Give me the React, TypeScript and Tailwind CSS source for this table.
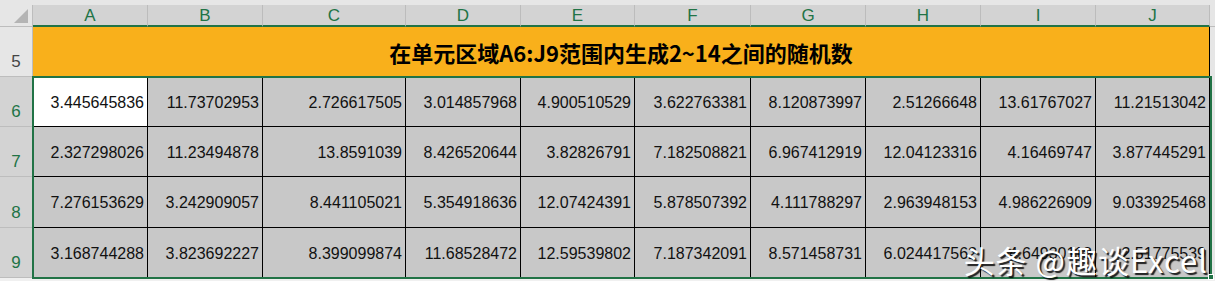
const cols = ['A', 'B', 'C', 'D', 'E', 'F', 'G', 'H', 'I', 'J']
const widths = ['w-[115px]', 'w-[115px]', 'w-[143px]', 'w-[115px]', 'w-[114px]', 'w-[116px]', 'w-[115px]', 'w-[115px]', 'w-[115px]', 'w-[114px]']

const rows = [
  { n: 6, h: 'h-[50px]', values: ['3.445645836', '11.73702953', '2.726617505', '3.014857968', '4.900510529', '3.622763381', '8.120873997', '2.51266648', '13.61767027', '11.21513042'] },
  { n: 7, h: 'h-[50px]', values: ['2.327298026', '11.23494878', '13.8591039', '8.426520644', '3.82826791', '7.182508821', '6.967412919', '12.04123316', '4.16469747', '3.877445291'] },
  { n: 8, h: 'h-[51px]', values: ['7.276153629', '3.242909057', '8.441105021', '5.354918636', '12.07424391', '5.878507392', '4.111788297', '2.963948153', '4.986226909', '9.033925468'] },
  { n: 9, h: 'h-[50px]', values: ['3.168744288', '3.823692227', '8.399099874', '11.68528472', '12.59539802', '7.187342091', '8.571458731', '6.024417562', '4.64930118', '2.51775539'] },
]

export default function App() {
  return (
    <div className="relative h-[281px] w-[1215px] overflow-hidden bg-[#f0f0f0] font-['Liberation_Sans',sans-serif] text-[16px]">
      <div className="h-[5px] bg-[#e6e6e6]" />

      {/* column headers */}
      <div className="flex h-[22px]">
        <div className="relative w-[33px] border-r border-b border-[#bdbdbd] bg-[#e6e6e6]">
          <div className="absolute right-[4px] bottom-[3px] h-0 w-0 border-t-[14px] border-l-[14px] border-t-transparent border-l-transparent border-r-0 border-b-[14px] border-b-[#b4b4b4] border-r-transparent" />
        </div>
        {cols.map((c, i) => (
          <div
            key={c}
            className={`${widths[i]} flex items-center justify-center border-r border-[#bcbcbc] border-b-2 border-b-[#217346] bg-[#d3d3d3] text-[17px] leading-none text-[#217346]`}
          >
            {c}
          </div>
        ))}
        <div className="flex-1 border-b border-[#bdbdbd] bg-[#e6e6e6]" />
      </div>

      {/* row 5 title */}
      <div className="flex h-[50px]">
        <div className="flex w-[33px] items-end justify-center border-r border-b border-[#bdbdbd] bg-[#e6e6e6] pb-[2px] text-[17px] text-[#444]">
          5
        </div>
        <div className="flex w-[1177px] items-center justify-center border-r border-black bg-[#f9b01b] font-['Noto_Sans_CJK_SC',sans-serif] text-[22px] font-bold text-black">
          在单元区域A6:J9范围内生成2~14之间的随机数
        </div>
        <div className="flex-1 bg-[#e6e6e6]" />
      </div>

      {/* data rows */}
      {rows.map((r) => (
        <div key={r.n} className={`flex ${r.h}`}>
          <div className="flex w-[33px] items-end justify-center border-r border-b border-[#bdbdbd] bg-[#d3d3d3] pb-[2px] text-[17px] text-[#217346]">
            {r.n}
          </div>
          {r.values.map((v, i) => (
            <div
              key={i}
              className={`${widths[i]} flex items-center justify-end border-r border-b border-black pr-[3px] pt-[2px] text-[#111] ${
                r.n === 6 && i === 0 ? 'bg-white' : 'bg-[#c8c8c8]'
              }`}
            >
              {v}
            </div>
          ))}
          <div className="flex-1 bg-[#e6e6e6]" />
        </div>
      ))}

      {/* selection box */}
      <div className="absolute top-[76px] left-[32px] h-[203px] w-[1180px] border-2 border-[#217346]" />
      <div className="absolute top-[274px] left-[1208px] h-[6px] w-[6px] border border-white bg-[#217346]" />

      {/* watermark */}
      <div className="absolute right-[7px] bottom-[6px] font-['Noto_Sans_CJK_SC',sans-serif] text-[31px] leading-none tracking-[1px] text-white [text-shadow:2px_2px_1px_rgba(0,0,0,0.85)]">
        头条 @趣谈Excel
      </div>
    </div>
  )
}
